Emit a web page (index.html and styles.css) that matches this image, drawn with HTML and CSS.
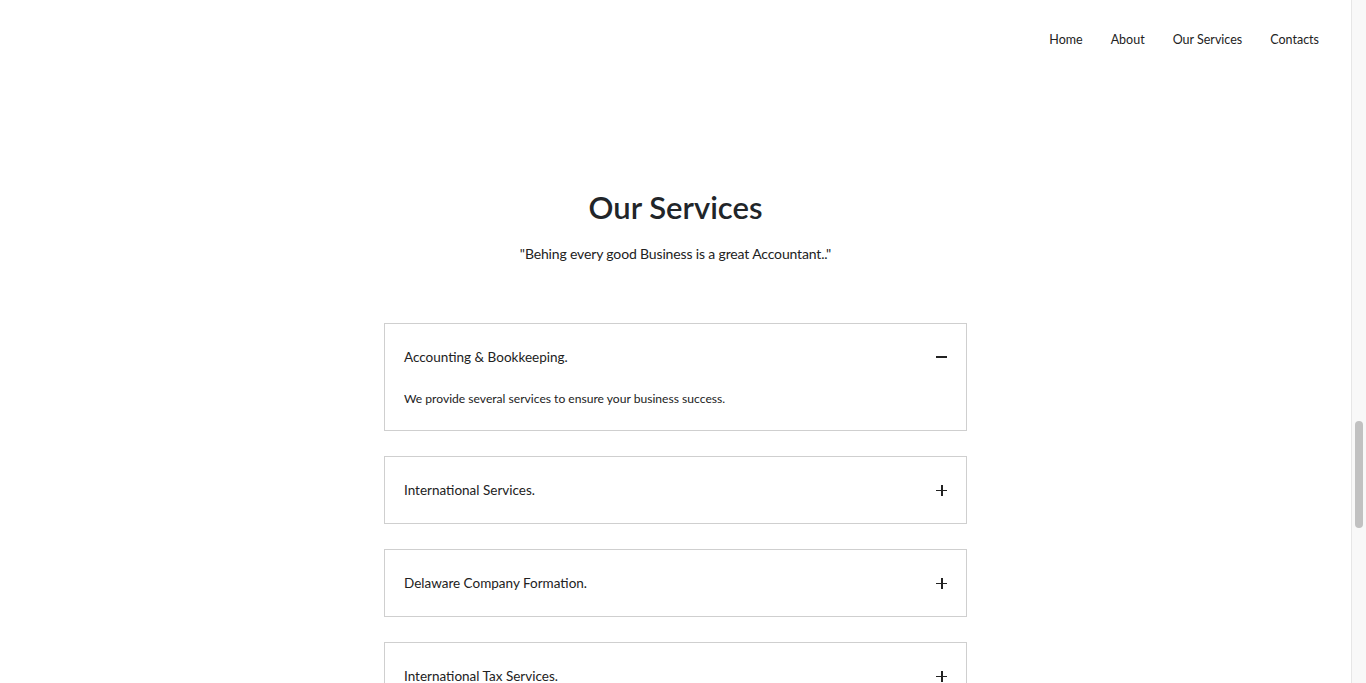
FILE: index.html
```html
<!DOCTYPE html>
<html lang="en">
<head>
<meta charset="utf-8">
<title>Our Services</title>
<link rel="stylesheet" href="styles.css">
</head>
<body>
<div class="page">
  <header class="topbar">
    <nav class="nav">
      <a href="#" class="nav-link">Home</a>
      <a href="#" class="nav-link">About</a>
      <a href="#" class="nav-link">Our Services</a>
      <a href="#" class="nav-link">Contacts</a>
    </nav>
  </header>
  <main class="services">
    <h1 class="title">Our Services</h1>
    <p class="quote">"Behing every good Business is a great Accountant.."</p>
    <div class="accordion">
      <div class="item open">
        <div class="item-head">
          <span class="item-title">Accounting &amp; Bookkeeping.</span>
          <span class="icon minus"></span>
        </div>
        <div class="item-body">We provide several services to ensure your business success.</div>
      </div>
      <div class="item">
        <div class="item-head">
          <span class="item-title">International Services.</span>
          <span class="icon plus"></span>
        </div>
      </div>
      <div class="item">
        <div class="item-head">
          <span class="item-title">Delaware Company Formation.</span>
          <span class="icon plus"></span>
        </div>
      </div>
      <div class="item">
        <div class="item-head">
          <span class="item-title">International Tax Services.</span>
          <span class="icon plus"></span>
        </div>
      </div>
    </div>
  </main>
</div>
<div class="scrollbar" aria-hidden="true">
  <div class="scroll-thumb"></div>
</div>
</body>
</html>
```
FILE: styles.css
```css
html, body { height: 100%; }
body {
  margin: 0;
  display: flex;
  overflow: hidden;
  font-family: Lato, "Open Sans", sans-serif;
  color: #212529;
  background: #fff;
}
.page {
  flex: 1;
  min-width: 0;
  overflow: hidden;
}
.scrollbar {
  width: 15px;
  flex: none;
  background: #f8f8f8;
  border-left: 1px solid #e6e6e6;
  display: flex;
  flex-direction: column;
  align-items: center;
  padding-top: 421px;
  box-sizing: border-box;
}
.scroll-thumb {
  width: 8px;
  height: 107px;
  border-radius: 4px;
  background: #c1c1c1;
}
.topbar {
  display: flex;
  justify-content: flex-end;
  padding: 31px 32px 0 0;
  height: 47px;
}
.nav {
  display: flex;
  gap: 28px;
}
.nav-link {
  font-size: 12.5px;
  line-height: 18px;
  color: #222;
  text-decoration: none;
}
.services {
  display: flex;
  flex-direction: column;
  align-items: center;
  padding-top: 107px;
}
.title {
  margin: 0;
  font-size: 31px;
  font-weight: 600;
  line-height: 44px;
  color: #212529;
}
.quote {
  margin: 15px 0 0;
  font-size: 14px;
  letter-spacing: -0.15px;
  line-height: 20px;
  color: #222;
}
.accordion {
  width: 583px;
  margin-top: 59px;
  display: flex;
  flex-direction: column;
  gap: 25px;
}
.item {
  border: 1px solid #cfcfcf;
}
.item-head {
  display: flex;
  align-items: center;
  justify-content: space-between;
  padding: 22px 19px 22px 19px;
  height: 22px;
}
.item-title {
  font-size: 13.5px;
  line-height: 22px;
  color: #222;
}
.item-body {
  padding: 0 19px 22px;
  font-size: 12.1px;
  line-height: 18px;
  color: #222;
}
.icon {
  position: relative;
  width: 11px;
  height: 11px;
}
.icon::before, .icon::after {
  content: "";
  position: absolute;
  background: #222;
}
.plus::before { left: 0; right: 0; top: 5px; height: 1.5px; }
.plus::after { top: 0; bottom: 0; left: 5px; width: 1.5px; }
.minus::before { left: 0; right: 0; top: 4.5px; height: 2px; }
.minus::after { display: none; }
```
